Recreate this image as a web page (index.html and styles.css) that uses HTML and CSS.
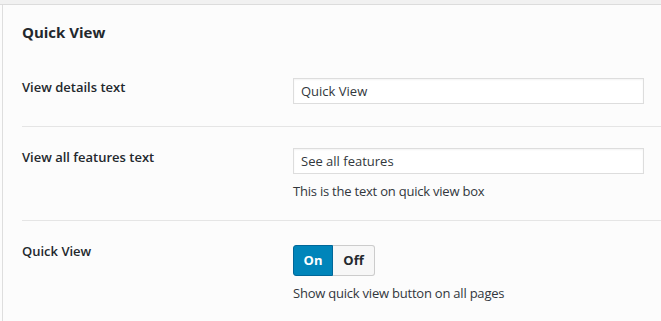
FILE: index.html
```html
<!DOCTYPE html>
<html>
<head>
<meta charset="utf-8">
<link rel="stylesheet" href="styles.css">
</head>
<body>
<div class="topbar"></div>
<div class="panel">
  <h2 class="title">Quick View</h2>
  <div class="row">
    <div class="label">View details text</div>
    <div class="control">
      <div class="input">Quick View</div>
    </div>
  </div>
  <div class="row with-desc">
    <div class="label">View all features text</div>
    <div class="control">
      <div class="input">See all features</div>
      <p class="desc">This is the text on quick view box</p>
    </div>
  </div>
  <div class="row last">
    <div class="label">Quick View</div>
    <div class="control">
      <div class="toggle"><span class="opt on">On</span><span class="opt off">Off</span></div>
      <p class="desc">Show quick view button on all pages</p>
    </div>
  </div>
</div>
</body>
</html>
```
FILE: styles.css
```css
html, body {
  margin: 0;
  padding: 0;
  background: #fcfcfc;
  font-family: "Open Sans", "Noto Sans", sans-serif;
  color: #32373c;
  overflow: hidden;
}
.topbar {
  height: 4px;
  background: #f1f1f1;
  border-bottom: 1px solid #dcdcdc;
}
.panel {
  margin-left: 2px;
  border-left: 1px solid #dedede;
  background: #fcfcfc;
  padding-left: 19px;
  height: 316px;
}
.title {
  margin: 0;
  padding-top: 16px;
  font-size: 15px;
  line-height: 22px;
  font-weight: 700;
  color: #23282d;
  height: 57px;
  box-sizing: border-box;
  height: 73px;
}
.row {
  display: grid;
  grid-template-columns: 271px 351px;
  border-bottom: 1px solid #e5e5e5;
  padding: 21px 0 22px;
}
.row:first-of-type { padding-top: 0; }
.row.with-desc { padding-bottom: 20px; }
.row.last { border-bottom: none; }
.label {
  font-size: 13px;
  font-weight: 600;
  color: #23282d;
  line-height: 18px;
}
.input {
  box-sizing: border-box;
  height: 26px;
  border: 1px solid #dddddd;
  background: #fff;
  box-shadow: inset 0 1px 2px rgba(0,0,0,0.05);
  font-size: 13px;
  line-height: 24px;
  padding: 0 7px;
  color: #32373c;
}
.desc {
  margin: 9px 0 0;
  font-size: 13px;
  letter-spacing: -0.22px;
  line-height: 17px;
  color: #32373c;
}
.toggle {
  display: flex;
  height: 31px;
  margin-top: 3px;
}
.opt {
  box-sizing: border-box;
  height: 31px;
  font-size: 13px;
  font-weight: 700;
  line-height: 29px;
  text-align: center;
}
.on {
  width: 40px;
  background: #0085ba;
  border: 1px solid #006799;
  border-radius: 3px 0 0 3px;
  color: #fff;
}
.off {
  width: 42px;
  background: #f7f7f7;
  border: 1px solid #cccccc;
  border-left: none;
  border-radius: 0 3px 3px 0;
  color: #23282d;
}
```
